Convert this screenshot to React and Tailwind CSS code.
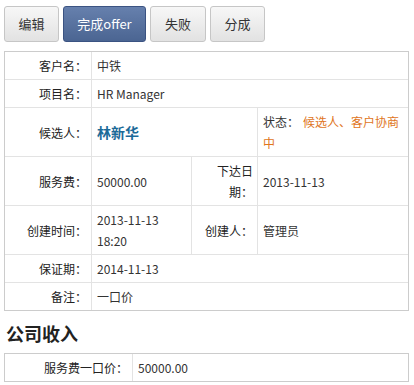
import React from "react"

const font = "font-['Noto_Sans_CJK_SC','Noto_Sans',sans-serif]"

const grayBtn =
  "h-[36px] rounded-[3px] border border-[#c6c6c6] bg-gradient-to-b from-[#f7f7f7] to-[#e2e2e2] text-[13px] text-[#333] flex items-center justify-center"
const blueBtn =
  "h-[36px] rounded-[3px] border border-[#3b5382] bg-gradient-to-b from-[#6680ad] to-[#4b6592] text-[13px] text-white flex items-center justify-center"

// cell helpers: inner borders only, outer border comes from the wrapper
const label = "text-right align-middle pr-[4px] pl-[4px] py-[3px] leading-[21px] text-[#222] border-r border-b border-[#e3e3e3]"
const value = "text-left align-middle pl-[5px] pr-[4px] py-[3px] leading-[21px] text-[#333] border-r border-b border-[#e3e3e3]"

export default function App() {
  return (
    <div className={`${font} bg-white w-[414px] h-[385px] text-[12px]`}>
      <div className="flex gap-[4px] pl-[4px] pt-[6px]">
        <button className={`${grayBtn} w-[55px]`}>编辑</button>
        <button className={`${blueBtn} w-[83px]`}>完成offer</button>
        <button className={`${grayBtn} w-[56px]`}>失败</button>
        <button className={`${grayBtn} w-[55px]`}>分成</button>
      </div>

      <div className="ml-[4px] mt-[9px] w-[405px] border border-[#cccccc]">
        <table className="w-full table-fixed border-separate border-spacing-0">
          <colgroup>
            <col className="w-[87px]" />
            <col className="w-[100px]" />
            <col className="w-[66px]" />
            <col />
          </colgroup>
          <tbody>
            <tr>
              <td className={label}>客户名：</td>
              <td className={`${value} border-r-0`} colSpan={3}>中铁</td>
            </tr>
            <tr>
              <td className={label}>项目名：</td>
              <td className={`${value} border-r-0`} colSpan={3}>HR Manager</td>
            </tr>
            <tr>
              <td className={label}>候选人：</td>
              <td className={value} colSpan={2}>
                <span className="text-[14px] font-bold text-[#1b6a98]">林新华</span>
              </td>
              <td className={`${value} border-r-0 pl-[3px]`}>
                状态：<span className="ml-[4px] text-[#e0751c]">候选人、客户协商中</span>
              </td>
            </tr>
            <tr>
              <td className={label}>服务费：</td>
              <td className={value}>50000.00</td>
              <td className={label}>
                下达日
                <br />
                期：
              </td>
              <td className={`${value} border-r-0 pl-[3px]`}>2013-11-13</td>
            </tr>
            <tr>
              <td className={label}>创建时间：</td>
              <td className={value}>
                2013-11-13
                <br />
                18:20
              </td>
              <td className={label}>创建人：</td>
              <td className={`${value} border-r-0 pl-[3px]`}>管理员</td>
            </tr>
            <tr>
              <td className={label}>保证期：</td>
              <td className={`${value} border-r-0`} colSpan={3}>2014-11-13</td>
            </tr>
            <tr>
              <td className={`${label} border-b-0`}>备注：</td>
              <td className={`${value} border-r-0 border-b-0`} colSpan={3}>一口价</td>
            </tr>
          </tbody>
        </table>
      </div>

      <h3 className="pl-[6px] mt-[10px] mb-[8px] text-[18px] leading-[24px] font-bold text-[#222]">公司收入</h3>

      <div className="ml-[4px] w-[405px] border border-[#cccccc]">
        <table className="w-full table-fixed border-separate border-spacing-0">
          <colgroup>
            <col className="w-[128px]" />
            <col />
          </colgroup>
          <tbody>
            <tr>
              <td className={`${label} border-b-0`}>服务费一口价：</td>
              <td className={`${value} border-r-0 border-b-0`}>50000.00</td>
            </tr>
          </tbody>
        </table>
      </div>
    </div>
  )
}
